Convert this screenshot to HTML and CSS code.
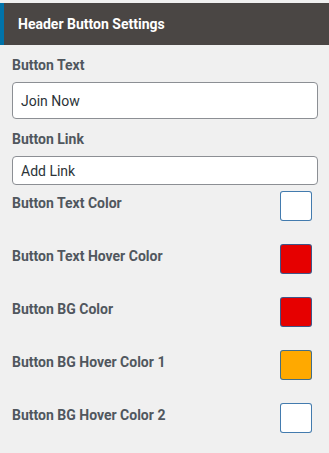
FILE: index.html
```html
<!DOCTYPE html>
<html lang="en">
<head>
  <meta charset="UTF-8" />
  <meta name="viewport" content="width=device-width, initial-scale=1.0" />
  <title>Header Button Settings</title>
  <link rel="stylesheet" href="styles.css">
</head>
<body>
  <div class="panel-title">Header Button Settings</div>

  <div class="settings">
    <div class="field">
      <label class="field-label" for="btnText">Button Text</label>
      <input class="text-input tall" id="btnText" type="text" value="Join Now" />
    </div>

    <div class="field">
      <label class="field-label" for="btnLink">Button Link</label>
      <input class="text-input" id="btnLink" type="text" value="Add Link" />
    </div>

    <div class="color-row">
      <span class="field-label">Button Text Color</span>
      <span class="swatch swatch-white"></span>
    </div>
    <div class="color-row">
      <span class="field-label">Button Text Hover Color</span>
      <span class="swatch swatch-red"></span>
    </div>
    <div class="color-row">
      <span class="field-label">Button BG Color</span>
      <span class="swatch swatch-red"></span>
    </div>
    <div class="color-row">
      <span class="field-label">Button BG Hover Color 1</span>
      <span class="swatch swatch-orange"></span>
    </div>
    <div class="color-row">
      <span class="field-label">Button BG Hover Color 2</span>
      <span class="swatch swatch-white"></span>
    </div>
  </div>
</body>
</html>
```

FILE: styles.css
```css
body {
  margin: 0;
  padding-top: 3px;
  background: #f0f0f0;
  font-family: Roboto, "Liberation Sans", sans-serif;
  font-size: 14px;
}
.panel-title {
  height: 42px;
  display: flex;
  align-items: center;
  padding-left: 14px;
  border-left: 4px solid #0073aa;
  background: #4a4644;
  color: #fff;
  font-weight: bold;
}
.settings { padding: 12px 11px 0 12px; }
.field { margin-bottom: 10px; }
.field + .field { margin-top: 12px; }
.field-label {
  display: block;
  line-height: 16px;
  font-weight: bold;
  color: #50575e;
}
.field .field-label { margin-bottom: 9px; }
.text-input {
  display: block;
  box-sizing: border-box;
  width: 100%;
  height: 29px;
  margin: 0;
  padding: 0 8px;
  border: 1px solid #8c8f94;
  border-radius: 4px;
  background: #fff;
  color: #2c3338;
  font: inherit;
}
.text-input.tall { height: 37px; }
/* filas de color: etiqueta a la izquierda, muestra a la derecha */
.color-row {
  display: flex;
  justify-content: space-between;
  align-items: flex-start;
  margin-top: -4px;
  margin-bottom: 27px;
}
.color-row .field-label { padding-top: 4px; }
.swatch {
  box-sizing: border-box;
  width: 32px;
  height: 30px;
  margin-right: 6px;
  border: 1px solid rgba(34, 100, 160, 0.85);
  border-radius: 3px;
}
.swatch-white { background: #fff; }
.swatch-red { background: #e60000; }
.swatch-orange { background: #ffa900; }
```
